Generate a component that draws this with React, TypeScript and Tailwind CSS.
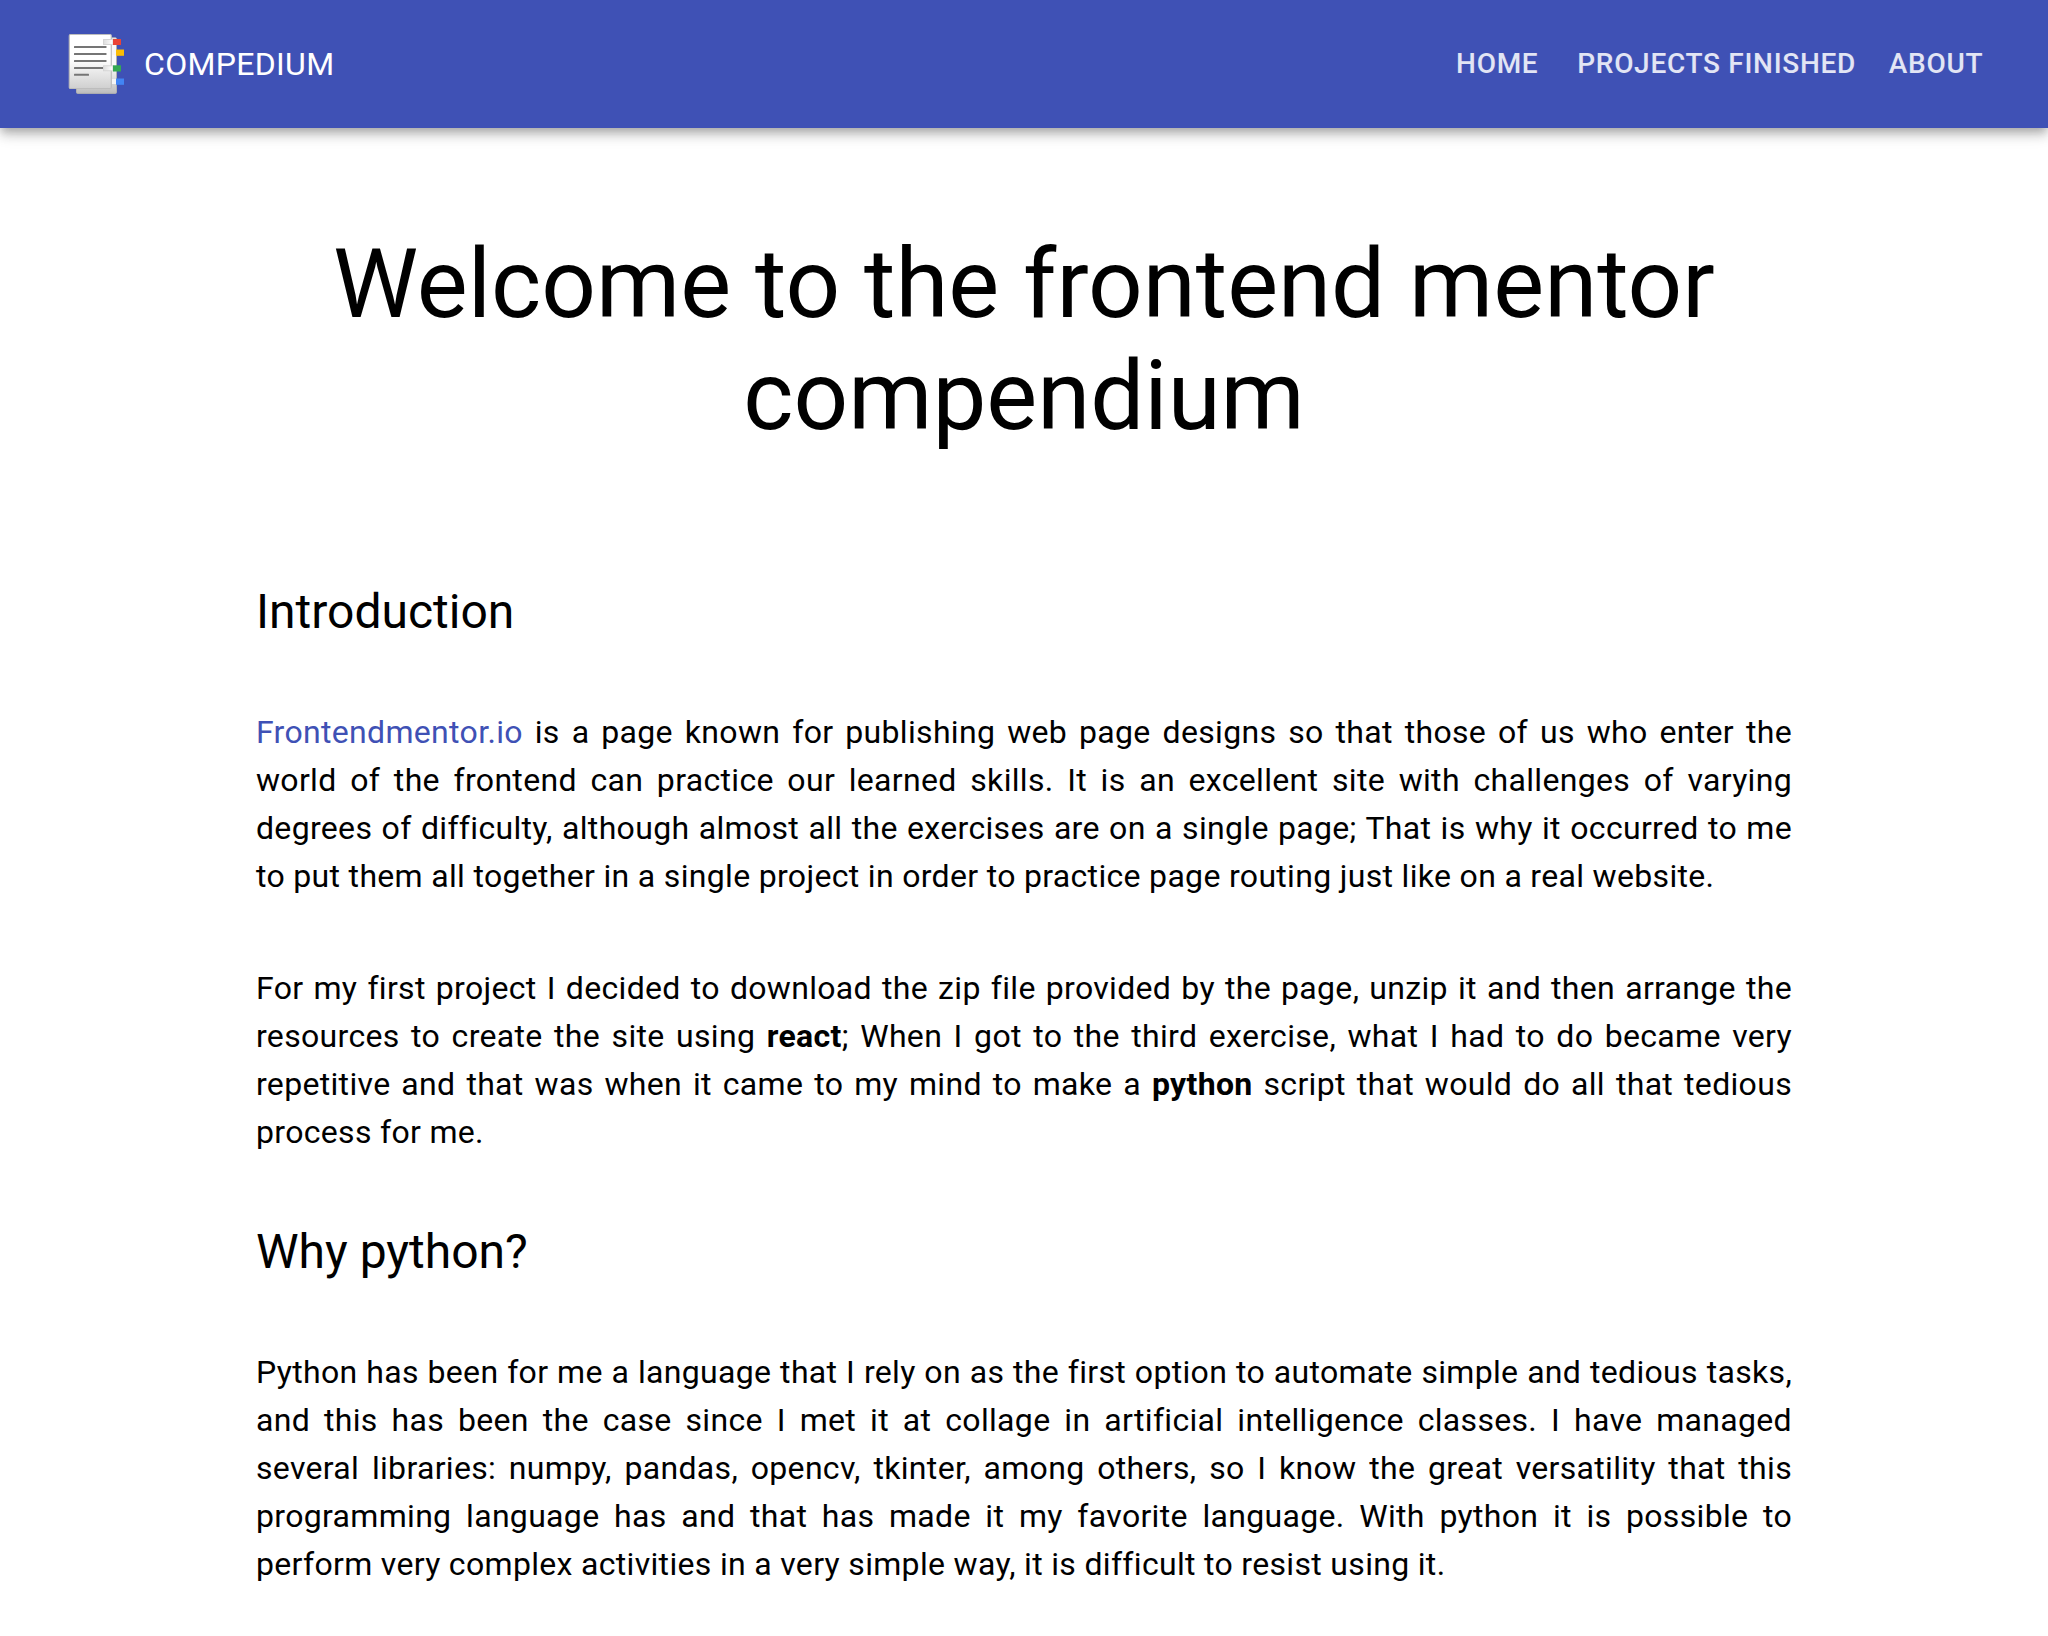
import React from "react";

function DocumentIcon() {
  return (
    <svg viewBox="0 0 64 64" className="size-16" aria-hidden="true">
      <defs>
        <linearGradient id="back" x1="0" y1="0" x2="0" y2="1">
          <stop offset="0.5" stopColor="#fafafa" />
          <stop offset="1" stopColor="#bdbdbd" />
        </linearGradient>
        <linearGradient id="front" x1="0" y1="0" x2="0" y2="1">
          <stop offset="0.45" stopColor="#ffffff" />
          <stop offset="1" stopColor="#cfcfcf" />
        </linearGradient>
        <linearGradient id="tab" x1="0" y1="0" x2="1" y2="0">
          <stop offset="0" stopColor="#dddddd" />
          <stop offset="1" stopColor="#ffffff" />
        </linearGradient>
      </defs>
      <rect x="12.5" y="5.8" width="40" height="55.6" rx="1" fill="url(#back)" stroke="#b0b0b0" strokeWidth="1" />
      <rect x="5.3" y="2.5" width="42" height="54" rx="1.2" fill="url(#front)" stroke="#bdbdbd" strokeWidth="1.2" />
      <g fill="#757575">
        <rect x="10" y="14" width="32.5" height="2" rx="0.5" />
        <rect x="10" y="21" width="32.5" height="2" rx="0.5" />
        <rect x="10" y="28" width="32.5" height="2" rx="0.5" />
        <rect x="10" y="35" width="30" height="2" rx="0.5" />
        <rect x="10" y="41.7" width="15" height="2" rx="0.5" />
      </g>
      <rect x="39.5" y="7.5" width="9.5" height="5" fill="url(#tab)" stroke="#d5d5d5" strokeWidth="1" />
      <rect x="49" y="7" width="8" height="6" fill="#ea4335" />
      <rect x="48" y="18" width="4" height="5" fill="#f5f5f5" />
      <rect x="52" y="17.5" width="8" height="6.3" fill="#fbbc04" />
      <rect x="39.5" y="33.8" width="9.5" height="5" fill="url(#tab)" stroke="#d5d5d5" strokeWidth="1" />
      <rect x="49" y="33.3" width="8" height="6.2" fill="#34a853" />
      <rect x="48" y="47" width="4" height="5" fill="#f5f5f5" />
      <rect x="52" y="46.5" width="8" height="6.3" fill="#4285f4" />
    </svg>
  );
}

function NavLink({ href, children }: { href: string; children: React.ReactNode }) {
  return (
    <a href={href} className="min-w-32 px-4 py-3 text-center text-[28px] leading-[48px] font-medium tracking-wide text-white/85">
      {children}
    </a>
  );
}

function SectionTitle({ children }: { children: React.ReactNode }) {
  return <h2 className="text-5xl leading-[64px]">{children}</h2>;
}

function Paragraph({ children }: { children: React.ReactNode }) {
  return <p className="text-justify text-[32px] leading-[48px] tracking-[0.01em]">{children}</p>;
}

export default function App() {
  return (
    <div className="min-h-screen bg-white font-[Roboto,sans-serif] text-black">
      <header className="flex h-32 items-center justify-between bg-[#3f51b5] px-12 shadow-[0_4px_8px_-2px_rgba(0,0,0,0.2),0_8px_10px_0_rgba(0,0,0,0.14),0_2px_20px_0_rgba(0,0,0,0.12)]">
        <a href="#home" className="flex items-center gap-4 px-4 text-[32px] leading-[48px] tracking-[0.01em] text-white">
          <DocumentIcon />
          COMPEDIUM
        </a>
        <nav className="flex items-center">
          <NavLink href="#home">HOME</NavLink>
          <NavLink href="#projects">PROJECTS FINISHED</NavLink>
          <NavLink href="#about">ABOUT</NavLink>
        </nav>
      </header>
      <main className="mx-auto flex w-3/4 flex-col gap-16 pt-[100px] pb-16">
        <h1 className="mb-16 text-center text-8xl leading-[112px]">Welcome to the frontend mentor compendium</h1>
        <SectionTitle>Introduction</SectionTitle>
        <Paragraph>
          <a href="https://www.frontendmentor.io" className="text-[#3f51b5]">Frontendmentor.io</a> is a page known for
          publishing web page designs so that those of us who enter the world of the frontend can practice our learned
          skills. It is an excellent site with challenges of varying degrees of difficulty, although almost all the
          exercises are on a single page; That is why it occurred to me to put them all together in a single project in
          order to practice page routing just like on a real website.
        </Paragraph>
        <Paragraph>
          For my first project I decided to download the zip file provided by the page, unzip it and then arrange the
          resources to create the site using <strong>react</strong>; When I got to the third exercise, what I had to do
          became very repetitive and that was when it came to my mind to make a <strong>python</strong> script that
          would do all that tedious process for me.
        </Paragraph>
        <SectionTitle>Why python?</SectionTitle>
        <Paragraph>
          Python has been for me a language that I rely on as the first option to automate simple and tedious tasks, and
          this has been the case since I met it at collage in artificial intelligence classes. I have managed several
          libraries: numpy, pandas, opencv, tkinter, among others, so I know the great versatility that this programming
          language has and that has made it my favorite language. With python it is possible to perform very complex
          activities in a very simple way, it is difficult to resist using it.
        </Paragraph>
      </main>
    </div>
  );
}
